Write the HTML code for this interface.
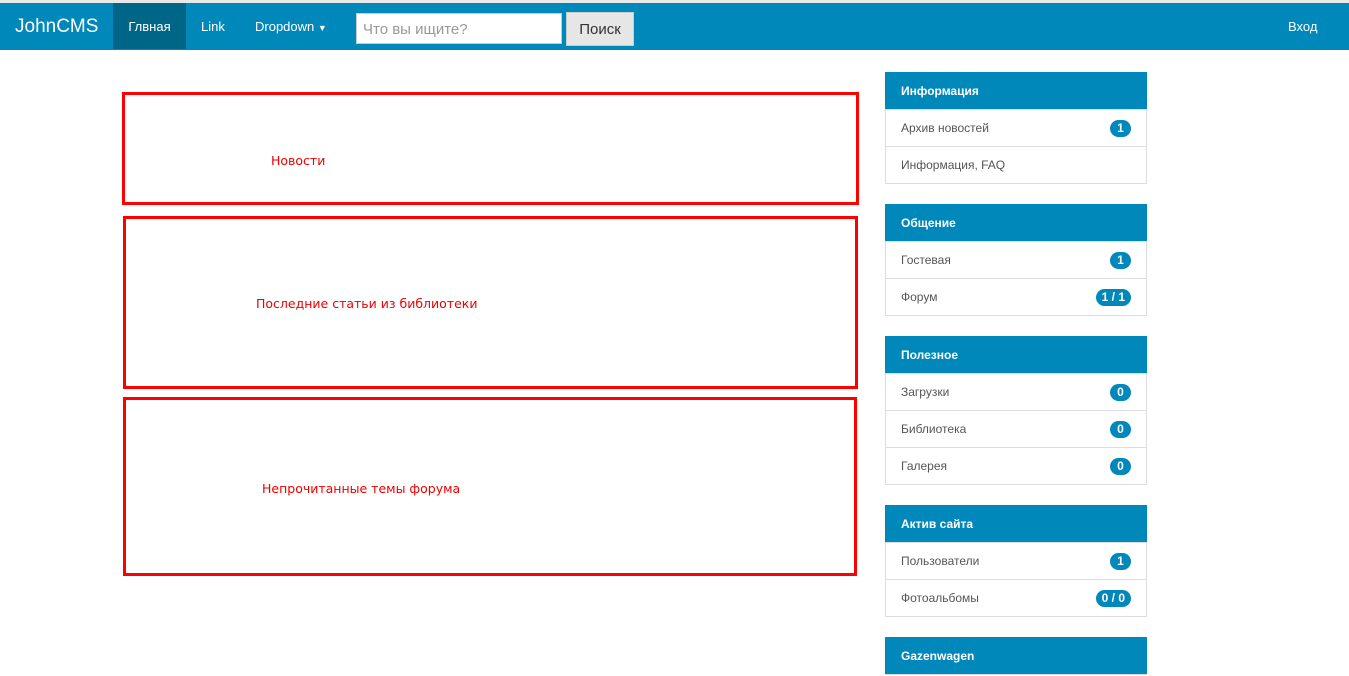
<!DOCTYPE html>
<html><head><meta charset="utf-8"><style>
*{box-sizing:border-box;margin:0;padding:0}
body{width:1349px;height:660px;overflow:hidden;background:#fff;font-family:"Liberation Sans",sans-serif;position:relative}
.top{position:absolute;left:0;top:0;width:1349px;height:3px;background:#e9e9e9}
.nav{position:absolute;left:0;top:3px;width:1349px;height:47px;background:#0088bb;color:#fff}
.nav .a{position:absolute;top:0;height:46px;line-height:48px;font-size:13px;color:#fff}
.brand{position:absolute;left:15px;top:0;line-height:47px;font-size:19px;color:#fff}
.inp{position:absolute;left:356px;top:10px;width:206px;height:31px;border:1px solid #ccc;background:#fff;font-size:15px;color:#999;padding:7px 6px;line-height:18px}
.btn{position:absolute;left:566px;top:9px;width:68px;height:34px;border:1px solid #ccc;background:#e6e6e6;color:#333;font-size:15px;text-align:center;line-height:34px}
.box{position:absolute;border:3px solid #f00}
.rt{position:absolute;color:#e00;font-family:"DejaVu Sans",sans-serif;font-size:12.5px}
.p{position:absolute;left:885px;width:262px;border:1px solid #ddd;border-top:none}
.h{background:#0088bb;color:#fff;font-weight:bold;font-size:12px;height:37px;line-height:39px;padding-left:16px;margin:0 -1px}
.r{height:37px;line-height:36px;border-top:1px solid #ddd;font-size:12px;color:#555;padding-left:15px;position:relative}
.r:first-of-type{border-top:none}
.b{position:absolute;right:15px;top:10px;height:17px;line-height:17px;border-radius:9px;background:#0088bb;color:#fff;font-weight:bold;font-size:12px;padding:0 6px;min-width:21px;text-align:center}
</style></head><body>
<div class="top"></div>
<div class="nav">
<div class="brand">JohnCMS</div>
<div class="a" style="left:113px;width:73px;background:#006688;text-align:center">Глвная</div>
<div class="a" style="left:201px">Link</div>
<div class="a" style="left:255px">Dropdown <span style="font-size:9px">▼</span></div>
<div class="inp">Что вы ищите?</div>
<div class="btn">Поиск</div>
<div class="a" style="left:1288px">Вход</div>
</div>
<div class="box" style="left:122px;top:92px;width:737px;height:113px"></div>
<div class="rt" style="left:271px;top:153px">Новости</div>
<div class="box" style="left:123px;top:216px;width:735px;height:173px"></div>
<div class="rt" style="left:256px;top:296px">Последние статьи из библиотеки</div>
<div class="box" style="left:123px;top:397px;width:734px;height:179px"></div>
<div class="rt" style="left:262px;top:481px">Непрочитанные темы форума</div>

<div class="p" style="top:72px"><div class="h">Информация</div>
<div class="r">Архив новостей<span class="b">1</span></div>
<div class="r">Информация, FAQ</div></div>
<div class="p" style="top:204px"><div class="h">Общение</div>
<div class="r">Гостевая<span class="b">1</span></div>
<div class="r">Форум<span class="b">1 / 1</span></div></div>
<div class="p" style="top:336px"><div class="h">Полезное</div>
<div class="r">Загрузки<span class="b">0</span></div>
<div class="r">Библиотека<span class="b">0</span></div>
<div class="r">Галерея<span class="b">0</span></div></div>
<div class="p" style="top:505px"><div class="h">Актив сайта</div>
<div class="r">Пользователи<span class="b">1</span></div>
<div class="r">Фотоальбомы<span class="b">0 / 0</span></div></div>
<div class="p" style="top:637px"><div class="h">Gazenwagen</div></div>
</body></html>
